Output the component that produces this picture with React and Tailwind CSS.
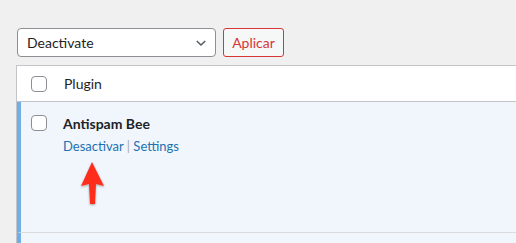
export default function App() {
  return (
    <div
      className="w-[516px] h-[243px] overflow-hidden bg-[#f0f0f1] pt-[28px] pl-[16px] text-[14px] text-[#1d2327]"
      style={{ fontFamily: 'Lato, "Noto Sans", sans-serif' }}
    >
      <div className="flex items-center gap-[7px] pl-[1px]">
        <div className="w-[199px] h-[29px] rounded-[4px] border border-[#8c8f94] bg-white flex items-center justify-between pl-[9px] pr-[7px]">
          <span className="text-[14px] leading-none">Deactivate</span>
          <svg width="14" height="14" viewBox="0 0 20 20" fill="none">
            <path d="M4 7l6 6 6-6" stroke="#50575e" strokeWidth="2" />
          </svg>
        </div>
        <div className="w-[61px] h-[29px] rounded-[3px] border border-[#d63638] bg-[#f6f7f7] flex items-center justify-center text-[#d63638] text-[14px]">
          Aplicar
        </div>
      </div>

      <div className="mt-[8px] w-[520px] border-t border-l border-[#c3c4c7]">
        <div className="h-[36px] bg-white border-b border-[#c3c4c7] flex items-center pl-[14px]">
          <span className="w-[16px] h-[16px] rounded-[4px] border border-[#8c8f94] bg-white" />
          <span className="ml-[17px] text-[14px]">Plugin</span>
        </div>
        <div className="h-[131px] bg-[#f0f6fc] border-l-4 border-[#72aee6] border-b border-b-[#dcdcde] flex pl-[10px] pt-[13px]">
          <span className="w-[16px] h-[16px] rounded-[4px] border border-[#8c8f94] bg-white shrink-0" />
          <div className="ml-[16px] -mt-[2px]">
            <div className="font-bold text-[14px]">Antispam Bee</div>
            <div className="mt-[3px] text-[13px] text-[#2271b1]">
              Desactivar <span className="text-[#a7aaad]">|</span> Settings
            </div>
            <svg width="30" height="48" viewBox="0 0 30 48" className="ml-[15px] mt-[3px]">
              <defs>
                <filter id="sh" x="-50%" y="-50%" width="200%" height="200%">
                  <feDropShadow dx="0" dy="1" stdDeviation="1" floodColor="#000" floodOpacity="0.35" />
                </filter>
              </defs>
              <path
                d="M14 2 L26 26 L18 24 L17 44 L12 44 L11 24 L3 26 Z"
                fill="#ff2d1f"
                filter="url(#sh)"
              />
            </svg>
          </div>
        </div>
        <div className="h-[20px] bg-[#f0f6fc] border-l-4 border-[#72aee6]" />
      </div>
    </div>
  );
}
